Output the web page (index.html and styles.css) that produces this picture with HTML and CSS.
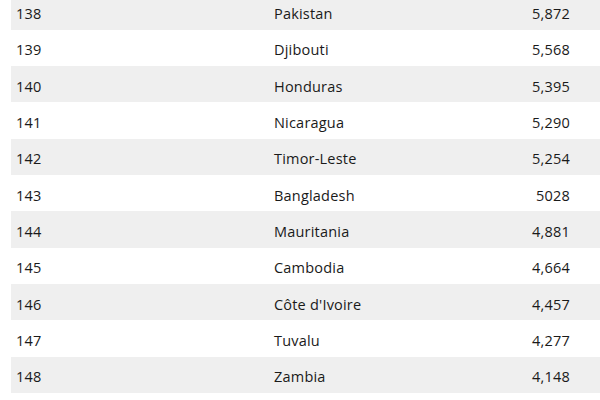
FILE: index.html
```html
<!DOCTYPE html>
<html>
<head>
<meta charset="utf-8">
<link rel="stylesheet" href="styles.css">
</head>
<body>
<div class="table">
  <div class="row shaded"><span class="rank">138</span><span class="country">Pakistan</span><span class="value">5,872</span></div>
  <div class="row"><span class="rank">139</span><span class="country">Djibouti</span><span class="value">5,568</span></div>
  <div class="row shaded"><span class="rank">140</span><span class="country">Honduras</span><span class="value">5,395</span></div>
  <div class="row"><span class="rank">141</span><span class="country">Nicaragua</span><span class="value">5,290</span></div>
  <div class="row shaded"><span class="rank">142</span><span class="country">Timor-Leste</span><span class="value">5,254</span></div>
  <div class="row"><span class="rank">143</span><span class="country">Bangladesh</span><span class="value">5028</span></div>
  <div class="row shaded"><span class="rank">144</span><span class="country">Mauritania</span><span class="value">4,881</span></div>
  <div class="row"><span class="rank">145</span><span class="country">Cambodia</span><span class="value">4,664</span></div>
  <div class="row shaded"><span class="rank">146</span><span class="country">Côte d'Ivoire</span><span class="value">4,457</span></div>
  <div class="row"><span class="rank">147</span><span class="country">Tuvalu</span><span class="value">4,277</span></div>
  <div class="row shaded"><span class="rank">148</span><span class="country">Zambia</span><span class="value">4,148</span></div>
</div>
</body>
</html>
```

FILE: styles.css
```css
html, body {
  margin: 0;
  padding: 0;
  background: #ffffff;
}
body {
  font-family: "Open Sans", "Noto Sans", sans-serif;
  font-size: 14.5px;
  letter-spacing: 0.2px;
  color: #1a1a1a;
  overflow: hidden;
}
.table {
  margin-top: -6.67px;
  margin-left: 11px;
  display: flex;
  flex-direction: column;
}
.row {
  height: 36.33px;
  box-sizing: border-box;
  padding-top: 5px;
  display: flex;
  align-items: center;
  line-height: 20px;
}
.shaded {
  background: #efefef;
}
.rank {
  width: 258px;
  padding-left: 5px;
}
.country {
  flex: 1;
}
.value {
  width: 100px;
  text-align: right;
  padding-right: 30px;
}
```
